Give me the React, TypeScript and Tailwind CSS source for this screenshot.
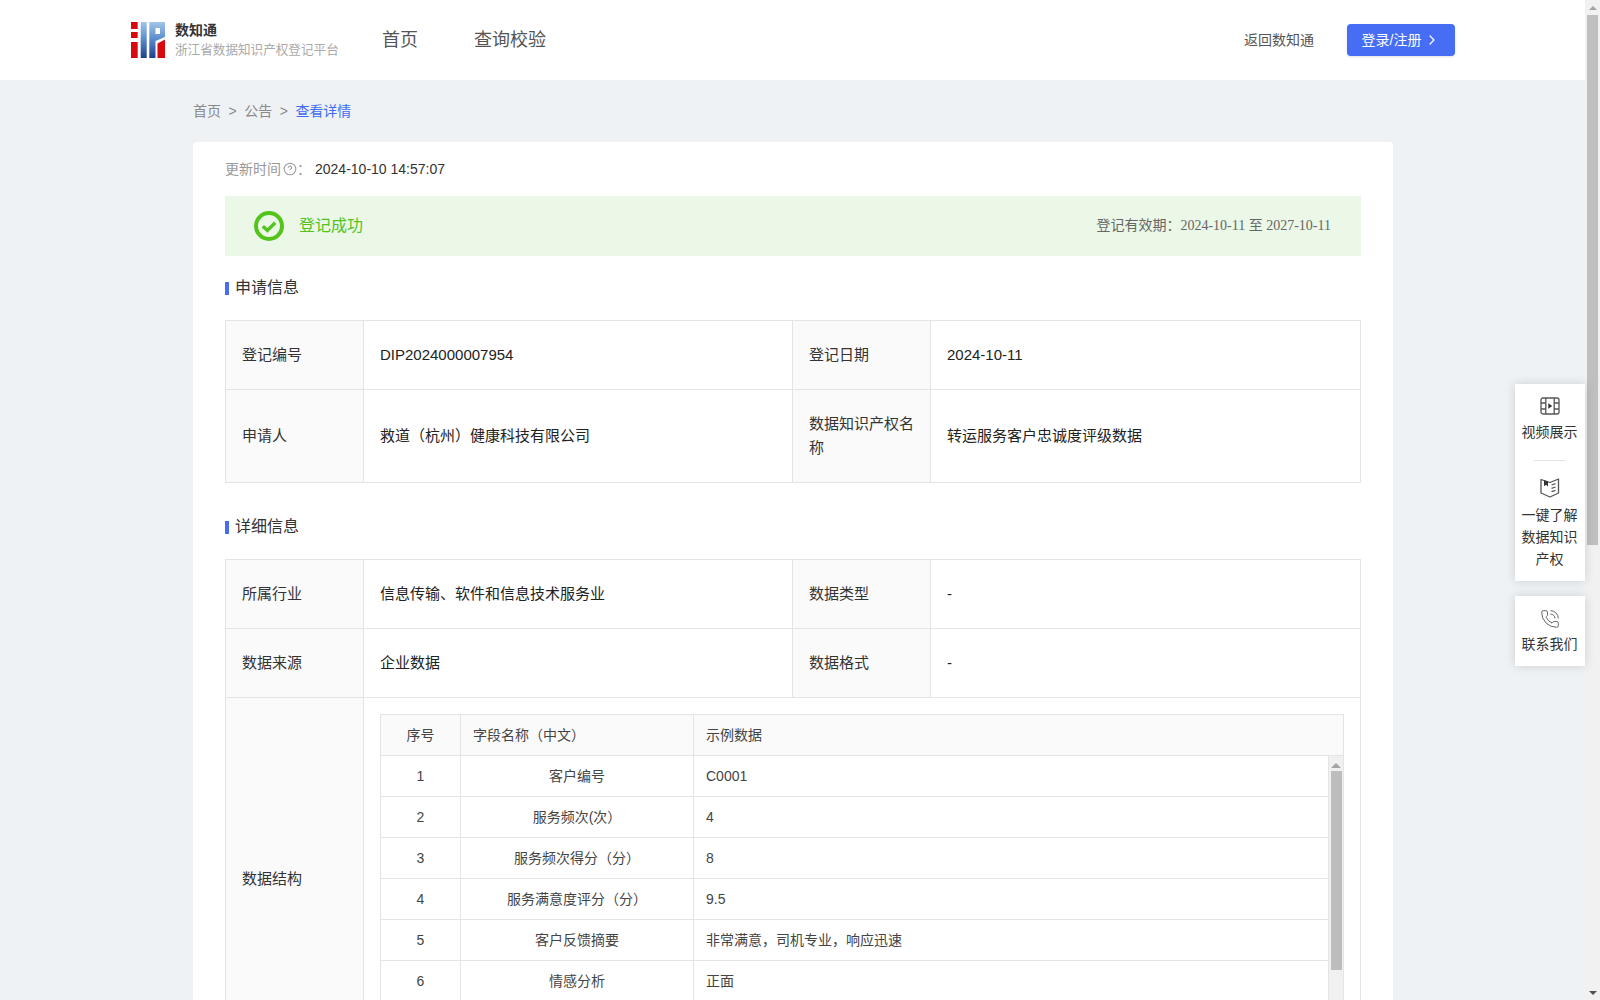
import { ChevronRight, CircleHelp, PhoneCall } from "lucide-react";

const fieldRows = [
  { no: 1, name: "客户编号", sample: "C0001" },
  { no: 2, name: "服务频次(次）", sample: "4" },
  { no: 3, name: "服务频次得分（分）", sample: "8" },
  { no: 4, name: "服务满意度评分（分）", sample: "9.5" },
  { no: 5, name: "客户反馈摘要", sample: "非常满意，司机专业，响应迅速" },
  { no: 6, name: "情感分析", sample: "正面" },
];

const Logo = () => (
  <svg width="34" height="36" viewBox="0 0 34 36" className="shrink-0">
    <defs>
      <linearGradient id="logoBlue" x1="0" y1="0" x2="0" y2="1">
        <stop offset="0" stopColor="#a3c6ea" />
        <stop offset="0.45" stopColor="#5f8fcc" />
        <stop offset="1" stopColor="#1f3f8f" />
      </linearGradient>
    </defs>
    <rect x="0" y="0" width="6.7" height="7" fill="#d8090f" />
    <rect x="0" y="10" width="6.7" height="6" fill="#d8090f" />
    <rect x="0" y="20" width="6.7" height="16" fill="#d8090f" />
    <rect x="9.7" y="0" width="6" height="36" fill="url(#logoBlue)" />
    <path
      fillRule="evenodd"
      d="M18.3 0H34V15L24.5 19V36H18.3ZM24.5 6V12H29V6Z"
      fill="url(#logoBlue)"
    />
    <path d="M26.5 21.5L34 17.5V36H26.5Z" fill="#d8090f" />
  </svg>
);

const VideoIcon = () => (
  <svg width="20" height="20" viewBox="0 0 20 20" fill="none" stroke="#555" strokeWidth="1.3">
    <rect x="1" y="2" width="18" height="16" rx="2" />
    <path d="M5.8 2v16M14.2 2v16M1 7h4.8M1 13h4.8M14.2 7H19M14.2 13H19" />
    <path d="M8.3 7.2v5.6l4-2.8z" fill="#333" stroke="none" />
  </svg>
);

const BookIcon = () => (
  <svg width="20" height="21" viewBox="0 0 20 21" fill="none" stroke="#555" strokeWidth="1.3">
    <path d="M1 2.5l9 3 8.5-3.5v14l-8.5 4-9-4z" strokeLinejoin="round" />
    <path d="M4 3.2v6l2-1.4 2 1.8V4.6z" fill="#333" stroke="none" />
    <path d="M11.5 8l4-1.3M11.5 11.3l4-1.3M11.5 14.6l4-1.3" />
  </svg>
);

const SuccessIcon = () => (
  <svg width="30" height="30" viewBox="0 0 30 30" fill="none" stroke="#52c41a">
    <circle cx="15" cy="15" r="13" strokeWidth="4" />
    <path d="M8.8 15.2l4.6 4.2 7.8-7.6" strokeWidth="3.4" />
  </svg>
);

const SectionTitle = ({ children, className }: { children: string; className: string }) => (
  <div className={`flex items-center ${className}`}>
    <span className="h-[13px] w-1 bg-[#466df3]" />
    <span className="ml-[6px] text-base text-[#333]">{children}</span>
  </div>
);

const labelCell = "border border-[#e4e4e4] bg-[#fafafa] px-4 text-left text-[15px] font-normal leading-6 text-[#333]";
const valueCell = "border border-[#e4e4e4] px-4 text-[15px] text-[#222]";

const ColumnWidths = () => (
  <colgroup>
    <col className="w-[138px]" />
    <col className="w-[429px]" />
    <col className="w-[138px]" />
    <col />
  </colgroup>
);

const FieldTable = () => (
  <div className="w-[964px] border border-[#e4e4e4] text-sm text-[#444]">
    <div className="flex h-[40px] items-center bg-[#fafafa]">
      <div className="flex h-full w-[80px] items-center justify-center border-r border-[#e4e4e4]">序号</div>
      <div className="flex h-full w-[233px] items-center border-r border-[#e4e4e4] pl-3">字段名称（中文）</div>
      <div className="pl-3">示例数据</div>
    </div>
    <div className="flex h-[287px] border-t border-[#e4e4e4]">
      <div className="flex-1">
        {fieldRows.map((row) => (
          <div key={row.no} className="flex h-[41px] items-center border-b border-[#e4e4e4]">
            <div className="flex h-full w-[80px] items-center justify-center border-r border-[#e4e4e4]">{row.no}</div>
            <div className="flex h-full w-[233px] items-center justify-center border-r border-[#e4e4e4]">{row.name}</div>
            <div className="pl-3">{row.sample}</div>
          </div>
        ))}
      </div>
      <div className="flex w-[15px] flex-col items-center border-l border-[#e4e4e4] bg-[#f0f0f0]">
        <div className="mt-[7px] h-0 w-0 border-x-[5px] border-b-[5px] border-x-transparent border-b-[#a3a3a3]" />
        <div className="mt-[3px] h-[199px] w-[11px] bg-[#bdbdbd]" />
      </div>
    </div>
  </div>
);

const PageScrollbar = () => (
  <div className="flex h-full w-[15px] shrink-0 flex-col items-center bg-[#f1f1f1]">
    <div className="mt-[6px] h-0 w-0 border-x-[4px] border-b-[4px] border-x-transparent border-b-[#a3a3a3]" />
    <div className="mt-[5px] h-[530px] w-[11px] bg-[#bfbfbf]" />
    <div className="mt-auto mb-[5px] h-0 w-0 border-x-[4px] border-t-[4px] border-x-transparent border-t-[#505050]" />
  </div>
);

const SideRail = () => (
  <div className="absolute top-[384px] right-[15px] w-[70px] text-center text-sm leading-[22px] text-[#333]">
    <div className="h-[197px] bg-white pt-[12px] pr-px shadow-[0_0_10px_rgba(0,0,0,0.14)]">
      <div className="flex justify-center">
        <VideoIcon />
      </div>
      <div className="mt-[5px]">视频展示</div>
      <div className="mx-auto mt-[17px] h-px w-8 bg-[#e4e4e4]" />
      <div className="mt-[16px] flex justify-center">
        <BookIcon />
      </div>
      <div className="mt-[6px]">
        一键了解
        <br />
        数据知识
        <br />
        产权
      </div>
    </div>
    <div className="mt-[15px] h-[70px] bg-white pt-[13px] pr-px shadow-[0_0_10px_rgba(0,0,0,0.14)]">
      <div className="flex justify-center">
        <PhoneCall size={20} strokeWidth={1.1} color="#555" />
      </div>
      <div className="mt-[4px]">联系我们</div>
    </div>
  </div>
);

export default function App() {
  return (
    <div className="relative flex h-screen w-full overflow-hidden bg-[#eef2f5] [font-family:'Liberation_Sans','Noto_Sans_CJK_SC',sans-serif]">
      <div className="flex h-full min-w-0 flex-1 flex-col">
        <header className="flex h-20 shrink-0 items-center bg-white pr-[130px] pl-[131px]">
          <Logo />
          <div className="ml-[10px] w-[208px]">
            <div className="text-sm leading-[18px] font-bold text-[#333]">数知通</div>
            <div className="mt-[2px] text-[12.6px] leading-[18px] whitespace-nowrap text-[#aaa]">浙江省数据知识产权登记平台</div>
          </div>
          <nav className="ml-[-1px] flex gap-[56px] text-lg text-[#555]">
            <a>首页</a>
            <a>查询校验</a>
          </nav>
          <a className="ml-auto text-sm text-[#555]">返回数知通</a>
          <button className="ml-[33px] flex h-8 w-[108px] items-center justify-center rounded-sm bg-[#466df3] pb-px text-sm text-white shadow-sm">
            登录/注册
            <ChevronRight size={16} strokeWidth={1.8} className="ml-[3px]" />
          </button>
        </header>

        <main className="min-h-0 flex-1 overflow-hidden">
          <div className="flex h-[62px] items-center pl-[193px] text-sm text-[#8a8a8a]">
            <span>首页</span>
            <span className="mx-[7.5px]">&gt;</span>
            <span>公告</span>
            <span className="mx-[7.5px]">&gt;</span>
            <span className="text-[#3f6cf5]">查看详情</span>
          </div>

          <section className="ml-[193px] w-[1200px] rounded-t bg-white px-8">
            <div className="flex h-[54px] items-center text-sm">
              <span className="text-[#999]">更新时间</span>
              <CircleHelp size={14} strokeWidth={1.8} color="#999" className="ml-[2px]" />
              <span className="mr-[4px] text-[#999]">：</span>
              <span className="text-[#333]">2024-10-10 14:57:07</span>
            </div>

            <div className="flex h-[60px] items-center bg-[#ebf7e7] pr-[30px] pl-[29px]">
              <SuccessIcon />
              <span className="ml-[15px] pb-px text-base text-[#52c41a]">登记成功</span>
              <span className="ml-auto pb-px text-sm text-[#666]">
                登记有效期：<span className="[font-family:'Liberation_Serif','Noto_Sans_CJK_SC',serif]">2024-10-11 至 2027-10-11</span>
              </span>
            </div>

            <SectionTitle className="h-16">申请信息</SectionTitle>
            <table className="w-full table-fixed border-collapse">
              <ColumnWidths />
              <tbody>
                <tr className="h-[69px]">
                  <th className={labelCell}>登记编号</th>
                  <td className={valueCell}>DIP2024000007954</td>
                  <th className={labelCell}>登记日期</th>
                  <td className={valueCell}>2024-10-11</td>
                </tr>
                <tr className="h-[93px]">
                  <th className={labelCell}>申请人</th>
                  <td className={valueCell}>救道（杭州）健康科技有限公司</td>
                  <th className={labelCell}>数据知识产权名称</th>
                  <td className={valueCell}>转运服务客户忠诚度评级数据</td>
                </tr>
              </tbody>
            </table>

            <SectionTitle className="h-[76px] pt-[12px]">详细信息</SectionTitle>
            <table className="w-full table-fixed border-collapse">
              <ColumnWidths />
              <tbody>
                <tr className="h-[69px]">
                  <th className={labelCell}>所属行业</th>
                  <td className={valueCell}>信息传输、软件和信息技术服务业</td>
                  <th className={labelCell}>数据类型</th>
                  <td className={valueCell}>-</td>
                </tr>
                <tr className="h-[69px]">
                  <th className={labelCell}>数据来源</th>
                  <td className={valueCell}>企业数据</td>
                  <th className={labelCell}>数据格式</th>
                  <td className={valueCell}>-</td>
                </tr>
                <tr>
                  <th className={labelCell}>数据结构</th>
                  <td colSpan={3} className="border border-[#e4e4e4] p-4">
                    <FieldTable />
                  </td>
                </tr>
              </tbody>
            </table>
          </section>
        </main>
      </div>

      <PageScrollbar />
      <SideRail />
    </div>
  );
}
